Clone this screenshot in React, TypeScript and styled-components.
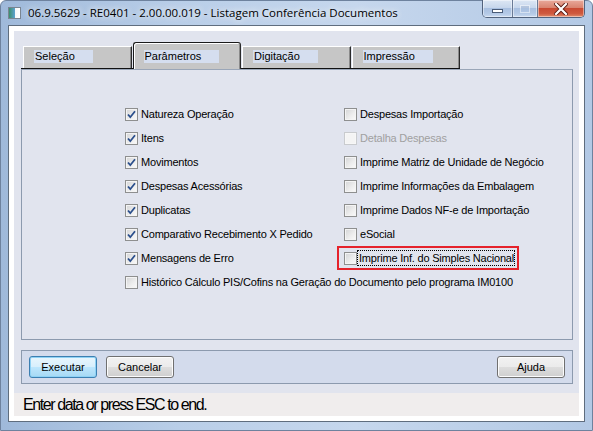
import styled, { createGlobalStyle } from "styled-components";

const GlobalStyle = createGlobalStyle`
  html, body {
    margin: 0;
    padding: 0;
    width: 593px;
    height: 431px;
    overflow: hidden;
    background: #ffffff;
  }
  * {
    box-sizing: border-box;
  }
`;

type Option = { label: string; checked?: boolean; disabled?: boolean; highlight?: boolean };

const leftOptions: Option[] = [
  { label: "Natureza Operação", checked: true },
  { label: "Itens", checked: true },
  { label: "Movimentos", checked: true },
  { label: "Despesas Acessórias", checked: true },
  { label: "Duplicatas", checked: true },
  { label: "Comparativo Recebimento X Pedido", checked: true },
  { label: "Mensagens de Erro", checked: true },
  { label: "Histórico Cálculo PIS/Cofins na Geração do Documento pelo programa IM0100" },
];

const rightOptions: Option[] = [
  { label: "Despesas Importação" },
  { label: "Detalha Despesas", disabled: true },
  { label: "Imprime Matriz de Unidade de Negócio" },
  { label: "Imprime Informações da Embalagem" },
  { label: "Imprime Dados NF-e de Importação" },
  { label: "eSocial" },
  { label: "Imprime Inf. do Simples Nacional", highlight: true },
];

const tabs = ["Seleção", "Parâmetros", "Digitação", "Impressão"];

export default function App() {
  return (
    <>
      <GlobalStyle />
      <Window>
        <TitleBar>
          <AppIcon />
          <Title>06.9.5629 - RE0401 - 2.00.00.019 - Listagem Conferência Documentos</Title>
          <Controls>
            <CtrlButton kind="min">
              <MinGlyph />
            </CtrlButton>
            <CtrlButton kind="max">
              <MaxGlyph />
            </CtrlButton>
            <CtrlButton kind="close">
              <svg width="14" height="12" viewBox="0 0 14 12">
                <path
                  d="M2 1 L12 11 M12 1 L2 11"
                  stroke="#5a1a12"
                  strokeWidth="4"
                  strokeLinecap="square"
                />
                <path
                  d="M2 1 L12 11 M12 1 L2 11"
                  stroke="#ffffff"
                  strokeWidth="2.2"
                  strokeLinecap="square"
                />
              </svg>
            </CtrlButton>
          </Controls>
        </TitleBar>
        <Client>
          <Content>
            <TabStrip>
              {tabs.map((t, i) => (
                <Tab key={t} active={i === 1}>
                  <TabLabel>{t}</TabLabel>
                </Tab>
              ))}
            </TabStrip>
            <Panel>
              <OptionsGrid>
                <Column>
                  {leftOptions.map(o => (
                    <OptionRow key={o.label} option={o} />
                  ))}
                </Column>
                <Column>
                  {rightOptions.map(o => (
                    <OptionRow key={o.label} option={o} />
                  ))}
                </Column>
              </OptionsGrid>
            </Panel>
            <ButtonBar>
              <PushButton primary>Executar</PushButton>
              <PushButton>Cancelar</PushButton>
              <PushButton push>Ajuda</PushButton>
            </ButtonBar>
          </Content>
          <StatusBar>Enter data or press ESC to end.</StatusBar>
        </Client>
      </Window>
    </>
  );
}

const OptionRow = ({ option }: { option: Option }) => {
  const box = (
    <CheckBox disabled={option.disabled}>
      {option.checked && (
        <svg width="11" height="11" viewBox="0 0 11 11">
          <path d="M2 5.5 L4.3 8.2 L9 2.3" fill="none" stroke="#2b4f8c" strokeWidth="1.8" />
        </svg>
      )}
    </CheckBox>
  );
  if (option.highlight) {
    return (
      <Item>
        <Highlight>
          {box}
          <FocusLabel>{option.label}</FocusLabel>
        </Highlight>
      </Item>
    );
  }
  return (
    <Item>
      {box}
      <ItemLabel disabled={option.disabled}>{option.label}</ItemLabel>
    </Item>
  );
};

const Window = styled.div`
  width: 593px;
  height: 431px;
  display: flex;
  flex-direction: column;
  padding: 0 7px 8px 7px;
  background: linear-gradient(to right, #9fb9da 0%, #b9cee8 30%, #c6d7ed 60%, #b3c9e5 100%);
  border: 1px solid #6e829e;
  border-radius: 6px 6px 0 0;
  font-family: "Liberation Sans", Arial, sans-serif;
`;

const TitleBar = styled.div`
  height: 25px;
  display: flex;
  align-items: flex-start;
`;

const AppIcon = styled.div`
  width: 13px;
  height: 12px;
  margin-top: 6px;
  border: 1px solid #7a8591;
  background: linear-gradient(to right, #3d8f6c 0%, #5aa0c8 50%, #f4f6f8 51%, #ffffff 100%);
`;

const Title = styled.div`
  margin: 4px 0 0 7px;
  font-family: "Open Sans", "Noto Sans", sans-serif;
  font-size: 11.5px;
  line-height: 16px;
  color: #000;
  text-shadow: 0 0 6px rgba(255, 255, 255, 0.9), 0 0 10px rgba(255, 255, 255, 0.6);
  white-space: nowrap;
  flex: 1;
`;

const Controls = styled.div`
  display: flex;
  height: 18px;
  margin-top: -1px;
  border: 1px solid #52637d;
  border-top: none;
  border-radius: 0 0 5px 5px;
  overflow: hidden;
`;

const CtrlButton = styled.div<{ kind: "min" | "max" | "close" }>`
  width: ${p => (p.kind === "close" ? 47 : p.kind === "min" ? 29 : 25)}px;
  display: flex;
  align-items: center;
  justify-content: center;
  border-left: ${p => (p.kind === "min" ? "none" : "1px solid #6a7b96")};
  background: ${p =>
    p.kind === "close"
      ? "linear-gradient(#e9a99b 0%, #d98470 45%, #c94a32 50%, #cf5a3f 80%, #e08d6e 100%)"
      : "linear-gradient(#dde7f4 0%, #c7d7ec 45%, #a9c0e0 50%, #b4c9e6 80%, #c9daf0 100%)"};
  box-shadow: inset 0 0 0 1px rgba(255, 255, 255, 0.45);
`;

const MinGlyph = styled.div`
  width: 11px;
  height: 4px;
  margin-top: 5px;
  background: #ffffff;
  border: 1px solid #4a5c78;
`;

const MaxGlyph = styled.div`
  width: 10px;
  height: 8px;
  border: 1px solid rgba(255, 255, 255, 0.6);
  box-shadow: inset 0 2px 0 rgba(150, 170, 200, 0.5);
  opacity: 0.8;
`;

const Client = styled.div`
  flex: 1;
  display: flex;
  flex-direction: column;
  background: #ffffff;
  border: 1px solid #5f6d7e;
  padding: 5px;
`;

const Content = styled.div`
  height: 362px;
  display: flex;
  flex-direction: column;
  background: #e1e4ee;
  padding: 12px 6px 9px 7px;
`;

const TabStrip = styled.div`
  display: flex;
  align-items: flex-end;
  height: 26px;
  padding-left: 2px;
  gap: 1px;
  border-bottom: 1px solid #111;
  margin-right: 113px;
`;

const Tab = styled.div<{ active?: boolean }>`
  width: 109px;
  height: ${p => (p.active ? 27 : 22)}px;
  margin-bottom: ${p => (p.active ? -1 : 0)}px;
  display: flex;
  align-items: flex-start;
  background: #c6c6c6;
  border-top: 1px solid ${p => (p.active ? "#1a1a1a" : "#ffffff")};
  border-left: 1px solid ${p => (p.active ? "#1a1a1a" : "#ffffff")};
  border-right: 1px solid #2a2a2a;
  border-radius: ${p => (p.active ? "3px 3px 0 0" : "0")};
  box-shadow: ${p =>
    p.active ? "inset 1px 1px 0 #ffffff, inset -1px 0 0 #8a8a8a" : "inset -1px 0 0 #8a8a8a"};
  padding: ${p => (p.active ? 7 : 3)}px 0 0 10px;
`;

const TabLabel = styled.span`
  display: block;
  height: 13px;
  line-height: 13px;
  padding: 0 18px 0 1px;
  background: #d5deef;
  font-size: 11px;
  color: #000;
`;

const Panel = styled.div`
  height: 271px;
  background: #e1e4ee;
  border: 1px solid #8c9aae;
  border-top-color: #9aa6b8;
`;

const OptionsGrid = styled.div`
  display: grid;
  grid-template-columns: 219px 1fr;
  padding: 32px 0 0 103px;
`;

const Column = styled.div`
  display: flex;
  flex-direction: column;
  align-items: flex-start;
`;

const Item = styled.div`
  height: 24px;
  display: flex;
  align-items: center;
  white-space: nowrap;
`;

const CheckBox = styled.span<{ disabled?: boolean }>`
  width: 13px;
  height: 13px;
  flex: none;
  display: flex;
  align-items: center;
  justify-content: center;
  border: 1px solid ${p => (p.disabled ? "#c9cbce" : "#8e8f8f")};
  background: ${p =>
    p.disabled ? "#f4f4f4" : "linear-gradient(135deg, #d3d4d6 0%, #eeeeee 60%, #fafafa 100%)"};
  box-shadow: inset 0 0 0 1px ${p => (p.disabled ? "#f7f7f7" : "#f4f4f4")};
`;

const ItemLabel = styled.span<{ disabled?: boolean }>`
  margin-left: 3px;
  font-size: 11px;
  letter-spacing: -0.2px;
  color: ${p => (p.disabled ? "#a0a0a0" : "#000")};
`;

const Highlight = styled.div`
  height: 24px;
  margin-left: -7px;
  display: flex;
  align-items: center;
  padding: 0 2px 0 5px;
  border: 2px solid #e5222b;
`;

const FocusLabel = styled.span`
  padding: 1px 0 1px 1px;
  border: 1px dotted #000;
  font-size: 11px;
  letter-spacing: -0.2px;
  color: #000;
`;

const ButtonBar = styled.div`
  height: 34px;
  margin-top: 10px;
  display: flex;
  align-items: center;
  gap: 9px;
  padding: 0 7px;
  background: #d3dbec;
  border: 1px solid #8c9aae;
`;

const PushButton = styled.button<{ primary?: boolean; push?: boolean }>`
  width: 68px;
  height: 22px;
  margin-left: ${p => (p.push ? "auto" : "0")};
  padding: 0;
  font-family: "Liberation Sans", Arial, sans-serif;
  font-size: 11px;
  color: #000;
  border-radius: 3px;
  border: 1px solid ${p => (p.primary ? "#3c7fb1" : "#707070")};
  background: ${p =>
    p.primary
      ? "linear-gradient(#e9f6fd 0%, #d7effc 50%, #bde6fd 51%, #a6d9f4 100%)"
      : "linear-gradient(#f2f2f2 0%, #ebebeb 50%, #dddddd 51%, #cfcfcf 100%)"};
  box-shadow: inset 0 0 0 1px ${p => (p.primary ? "#8fd2f5" : "#fcfcfc")};
`;

const StatusBar = styled.div`
  height: 23px;
  display: flex;
  align-items: center;
  padding-left: 9px;
  background: #f0eded;
  font-family: "Liberation Sans", Arial, sans-serif;
  font-size: 16px;
  letter-spacing: -1.4px;
  color: #000;
`;
